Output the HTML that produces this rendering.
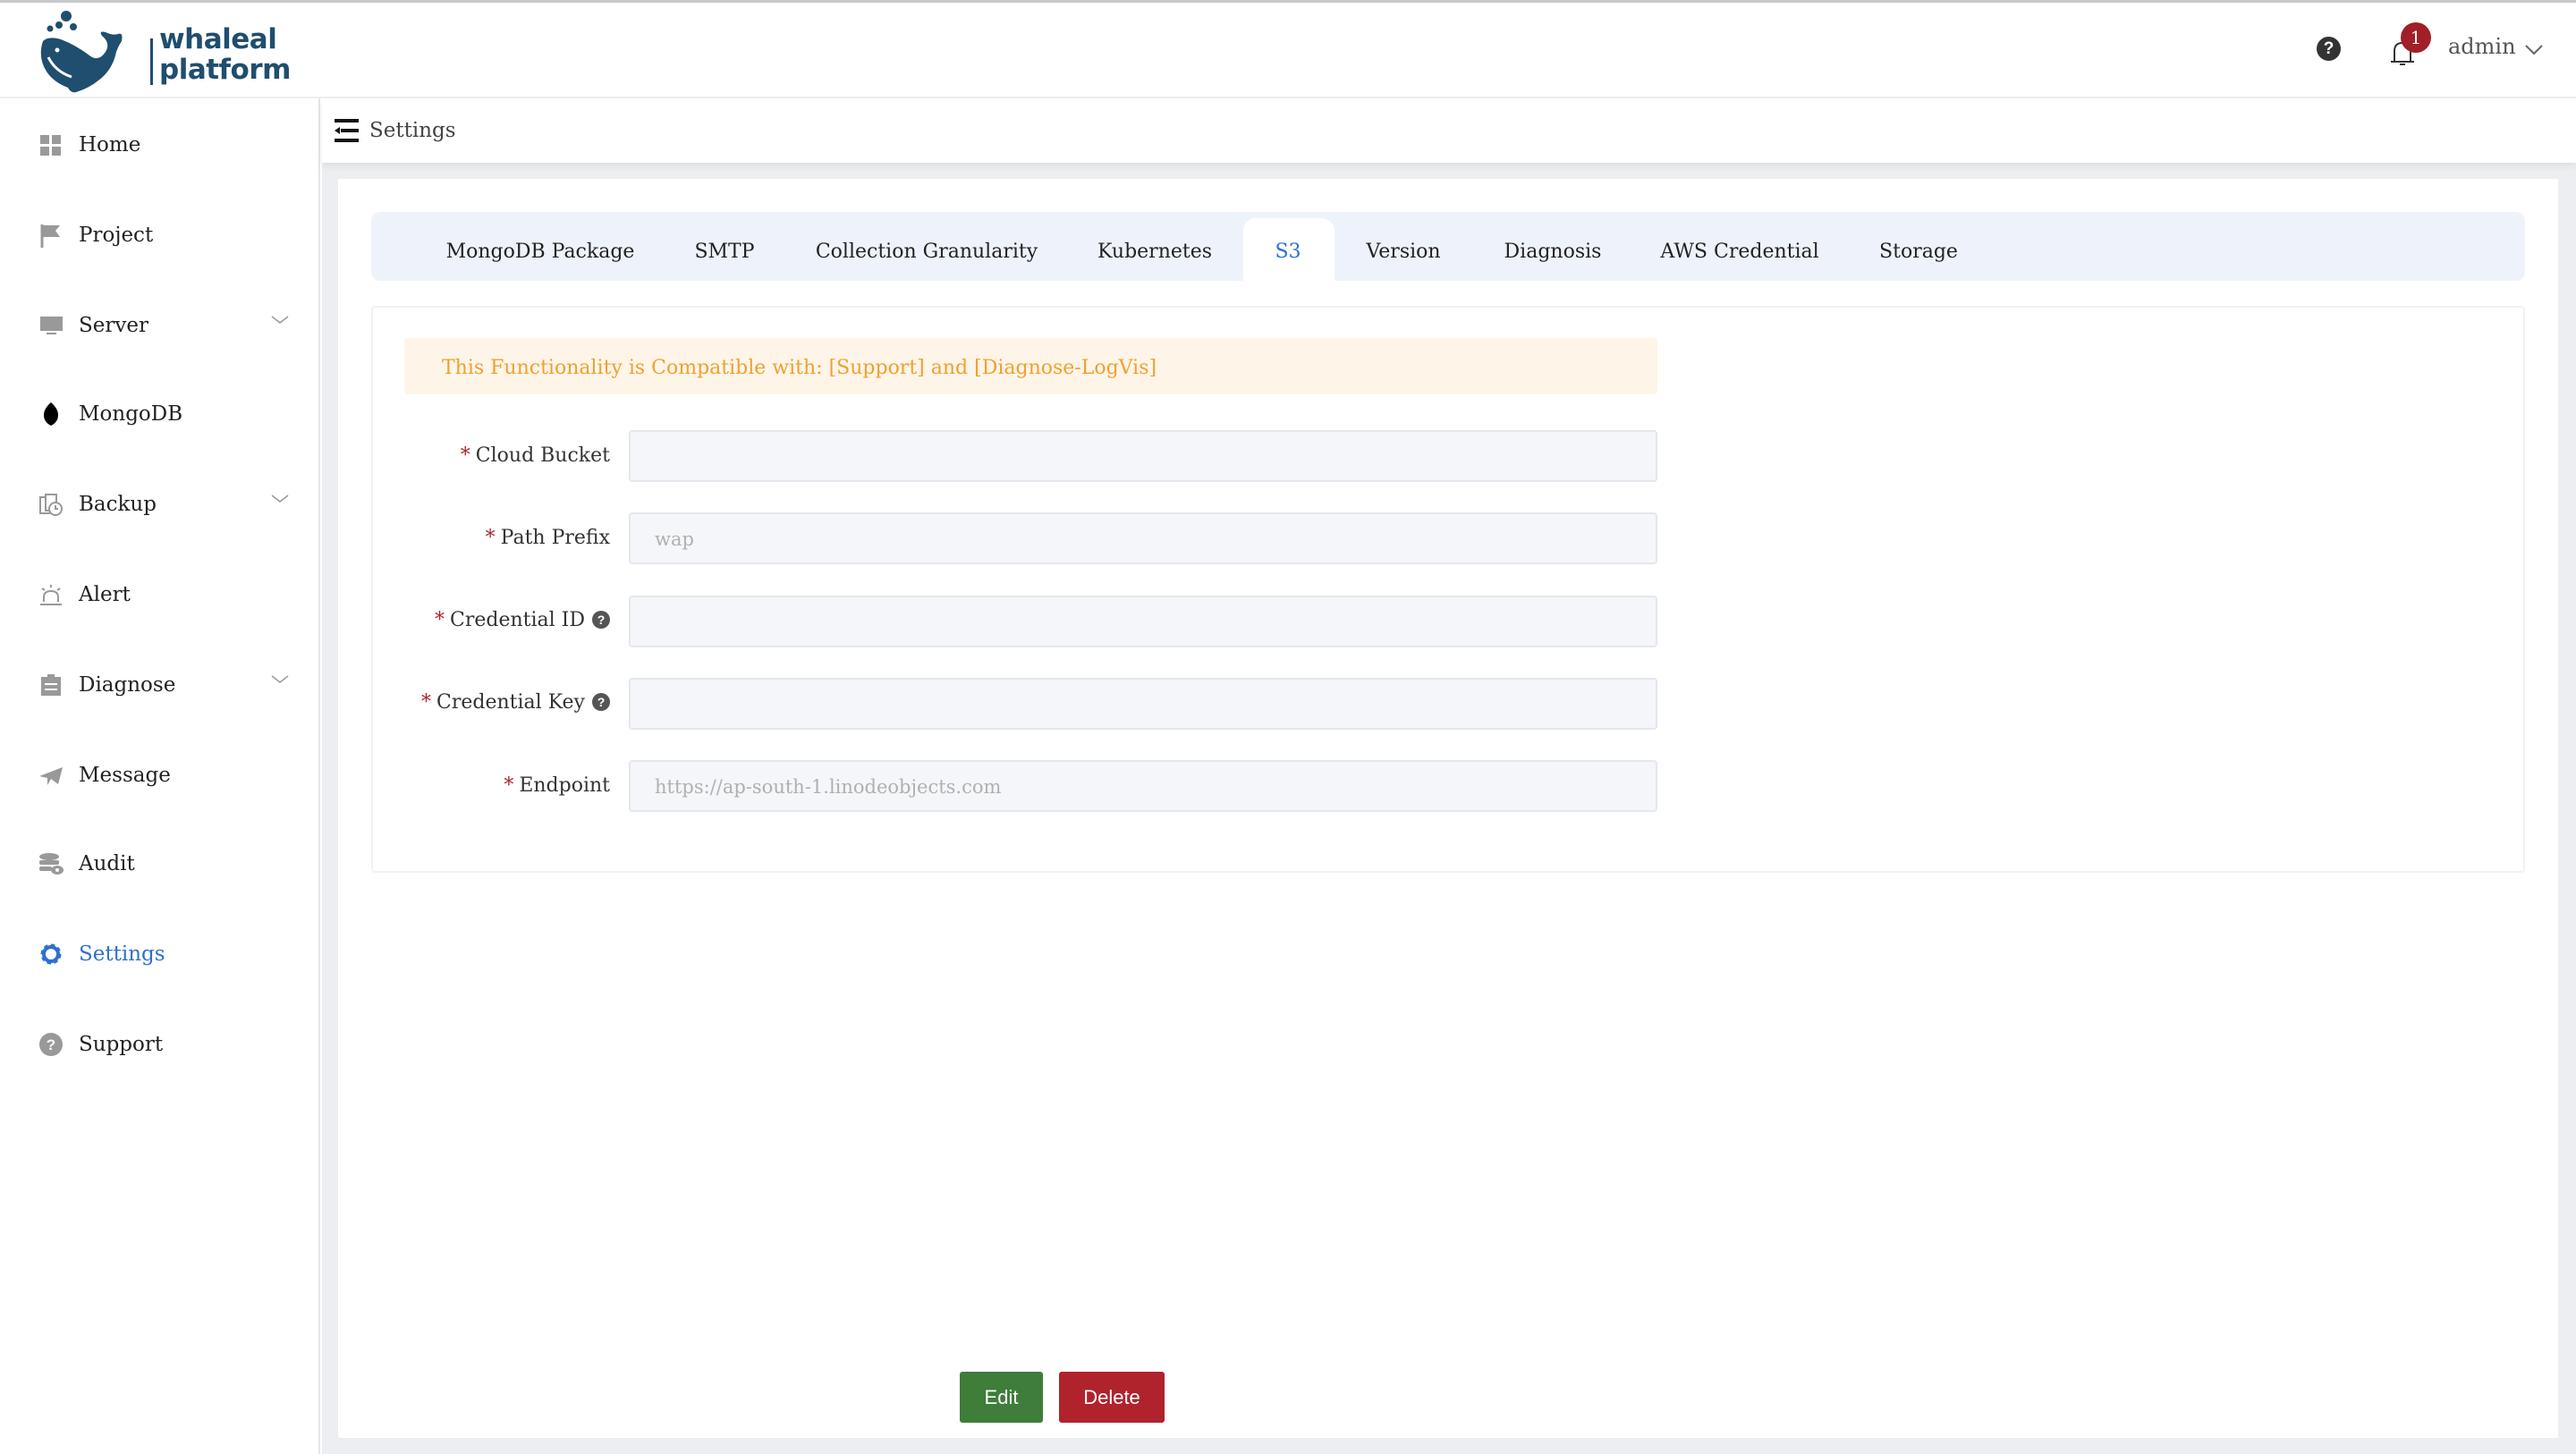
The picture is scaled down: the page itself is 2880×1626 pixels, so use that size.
<!DOCTYPE html>
<html><head><meta charset="utf-8"><style>
*{box-sizing:border-box;margin:0;padding:0}
body{width:2880px;height:1626px;overflow:hidden;background:#fff;font-family:"DejaVu Serif","Liberation Serif",serif;color:#222;position:relative}
.topline{position:absolute;left:0;top:0;width:2880px;height:3px;background:#c8c8c8}
.header{position:absolute;left:0;top:3px;width:2880px;height:107px;background:#fff;border-bottom:2px solid #eee}
.side{position:absolute;left:0;top:110px;width:358px;height:1516px;background:#fff;border-right:2px solid #e6e6e6}
.item{position:absolute;left:0;width:356px;height:60px;font-size:23px;display:flex;align-items:center}
.item .ic{position:absolute;left:43px;width:28px;height:28px;top:16px}
.item .tx{position:absolute;left:88px;top:17px}
.item .chev{position:absolute;left:303px;top:18px}
.crumb{position:absolute;left:360px;top:112px;width:2520px;height:70px;background:#fff;box-shadow:0 3px 8px rgba(0,0,0,.08)}
.main{position:absolute;left:360px;top:182px;width:2520px;height:1444px;background:#eceef2}
.card{position:absolute;left:378px;top:200px;width:2482px;height:1408px;background:#fff}
.tabs{position:absolute;left:415px;top:237px;width:2408px;height:77px;background:#eef3fb;border-radius:10px}
.tab{position:absolute;top:269px;font-size:22px;color:#222;transform:translateX(-50%);white-space:nowrap}
.panel{position:absolute;left:415px;top:342px;width:2408px;height:634px;border:2px solid #f0f2f5;border-radius:4px}
.alert{position:absolute;left:452px;top:378px;width:1401px;height:63px;background:#fef5e8;border-radius:4px;color:#f0a030;font-size:22px;padding:21px 0 0 42px}
.lbl{position:absolute;right:2198px;font-size:22px;color:#333;white-space:nowrap}
.lbl b{color:#b0222c;font-weight:normal;margin-right:6px}
.q{display:inline-block;width:20px;height:20px;border-radius:50%;background:#555;color:#fff;font-size:14px;text-align:center;line-height:20px;font-family:"Liberation Sans",sans-serif;font-weight:bold;margin-left:8px;vertical-align:2px}
.inp{position:absolute;left:703px;width:1150px;height:58px;background:#f5f6fa;border:2px solid #e4e7ed;border-radius:4px;font-size:21px;color:#b0b0b0;padding:16px 0 0 27px}
.btn{position:absolute;top:1534px;height:57px;color:#fff;font-family:"Liberation Sans",sans-serif;font-size:22px;text-align:center;line-height:57px;border-radius:3px}
</style></head><body>
<div class="topline"></div>
<div class="header">
  <svg style="position:absolute;left:40px;top:3px" width="120" height="100" viewBox="0 0 120 100">
    <g fill="#1f4e6e">
      <circle cx="34" cy="12" r="6"/><circle cx="26" cy="22" r="4"/><circle cx="42" cy="24" r="4"/><circle cx="16" cy="26" r="3.5"/>
      <path d="M8 40 Q14 34 28 38 Q44 44 60 56 Q70 64 78 52 Q84 42 74 34 Q70 28 78 30 Q86 34 92 32 Q98 30 96 40 Q92 46 90 52 Q86 72 70 84 Q60 92 48 96 Q40 100 36 92 Q20 86 12 74 Q2 58 8 40Z"/>
    </g>
    <path d="M14 58 Q22 74 40 80" stroke="#fff" stroke-width="3" fill="none"/>
    <circle cx="24" cy="50" r="2.5" fill="#fff"/>
  </svg>
  <div style="position:absolute;left:168px;top:40px;width:3px;height:52px;background:#1f4e6e"></div>
  <div style="position:absolute;left:178px;top:24px;font-family:'DejaVu Sans','Liberation Sans',sans-serif;font-weight:bold;color:#1f4e6e;font-size:31px;line-height:34px;letter-spacing:-0.5px">whaleal<br>platform</div>
  <div style="position:absolute;left:2590px;top:38px;width:27px;height:27px;border-radius:50%;background:#333;color:#fff;font-family:'Liberation Sans',sans-serif;font-weight:bold;font-size:19px;text-align:center;line-height:27px">?</div>
  <svg style="position:absolute;left:2671px;top:40px" width="30" height="32" viewBox="0 0 30 32"><path d="M6 25 V14 Q6 5 15 5 Q24 5 24 14 V25 M2 26 H28 M12 29 H18" stroke="#333" stroke-width="2" fill="none"/></svg>
  <div style="position:absolute;left:2684px;top:22px;width:34px;height:34px;border-radius:50%;background:#a01f28;color:#fff;font-size:20px;text-align:center;line-height:34px">1</div>
  <div style="position:absolute;left:2737px;top:35px;font-size:24px;color:#555">admin</div>
  <svg style="position:absolute;left:2822px;top:46px" width="22" height="14" viewBox="0 0 22 14"><path d="M2 2 L11 11 L20 2" stroke="#666" stroke-width="2" fill="none"/></svg>
</div>
<div class="side">
  <div class="item" style="top:22px"><svg class="ic" viewBox="0 0 28 28"><g fill="#999"><rect x="2" y="3" width="10" height="10"/><rect x="15" y="3" width="10" height="10"/><rect x="2" y="16" width="10" height="10"/><rect x="15" y="16" width="10" height="10"/></g></svg><span class="tx">Home</span></div>
  <div class="item" style="top:123px"><svg class="ic" viewBox="0 0 28 28"><path d="M4 2 V28" stroke="#999" stroke-width="3"/><path d="M5 3 H24 L19 9 L24 16 H5Z" fill="#999"/></svg><span class="tx">Project</span></div>
  <div class="item" style="top:224px"><svg class="ic" viewBox="0 0 28 28"><rect x="2" y="4" width="25" height="16" fill="#999"/><rect x="9" y="22" width="11" height="2" fill="#999"/></svg><span class="tx">Server</span><svg class="chev" width="20" height="12" viewBox="0 0 20 12"><path d="M1 2 L10 9 L19 2" stroke="#999" stroke-width="1.5" fill="none"/></svg></div>
  <div class="item" style="top:323px"><svg class="ic" viewBox="0 0 28 28"><path d="M14 1 Q22 8 22 15 Q22 23 14 27 Q6 23 6 15 Q6 8 14 1Z" fill="#000"/></svg><span class="tx">MongoDB</span></div>
  <div class="item" style="top:424px"><svg class="ic" viewBox="0 0 28 28"><g stroke="#999" stroke-width="2" fill="none"><rect x="2" y="6" width="12" height="18"/><rect x="8" y="3" width="12" height="18" fill="#fff"/><circle cx="19" cy="19" r="7" fill="#fff"/><path d="M19 15 V19 H22"/></g></svg><span class="tx">Backup</span><svg class="chev" width="20" height="12" viewBox="0 0 20 12"><path d="M1 2 L10 9 L19 2" stroke="#999" stroke-width="1.5" fill="none"/></svg></div>
  <div class="item" style="top:525px"><svg class="ic" viewBox="0 0 28 28"><g stroke="#999" stroke-width="2" fill="none"><path d="M6 22 V17 Q6 10 14 10 Q22 10 22 17 V22"/><path d="M2 25 H26 M14 3 V6 M4 7 L7 9 M24 7 L21 9"/></g></svg><span class="tx">Alert</span></div>
  <div class="item" style="top:626px"><svg class="ic" viewBox="0 0 28 28"><rect x="3" y="5" width="22" height="21" fill="#999"/><rect x="10" y="2" width="8" height="5" fill="#999"/><path d="M7 13 H21 M7 19 H21" stroke="#fff" stroke-width="2"/></svg><span class="tx">Diagnose</span><svg class="chev" width="20" height="12" viewBox="0 0 20 12"><path d="M1 2 L10 9 L19 2" stroke="#999" stroke-width="1.5" fill="none"/></svg></div>
  <div class="item" style="top:727px"><svg class="ic" viewBox="0 0 28 28"><path d="M1 15 L27 5 L22 24 L14 18 L10 25 L10 17Z" fill="#999"/></svg><span class="tx">Message</span></div>
  <div class="item" style="top:826px"><svg class="ic" viewBox="0 0 28 28"><g fill="#999"><ellipse cx="12" cy="6" rx="11" ry="4"/><rect x="1" y="10" width="22" height="5" rx="2"/><rect x="1" y="17" width="14" height="5" rx="2"/><ellipse cx="21" cy="21" rx="7" ry="5"/></g><circle cx="21" cy="21" r="2" fill="#fff"/></svg><span class="tx">Audit</span></div>
  <div class="item" style="top:927px;color:#2f6fd0"><svg class="ic" viewBox="0 0 28 28"><circle cx="14" cy="14" r="9" fill="none" stroke="#2f6fd0" stroke-width="5" stroke-dasharray="4 3"/><circle cx="14" cy="14" r="8" fill="none" stroke="#2f6fd0" stroke-width="4"/></svg><span class="tx">Settings</span></div>
  <div class="item" style="top:1028px"><svg class="ic" viewBox="0 0 28 28"><circle cx="14" cy="14" r="13" fill="#999"/><text x="14" y="20" font-size="17" font-family="Liberation Sans" font-weight="bold" fill="#fff" text-anchor="middle">?</text></svg><span class="tx">Support</span></div>
</div>
<div class="main"></div>
<div class="crumb">
  <svg style="position:absolute;left:14px;top:21px" width="28" height="26" viewBox="0 0 28 26"><rect x="0" y="0" width="27" height="4" fill="#111"/><rect x="7" y="11" width="20" height="4" fill="#111"/><rect x="0" y="22" width="27" height="4" fill="#111"/><path d="M0 13 L6 9 V17Z" fill="#111"/></svg>
  <div style="position:absolute;left:53px;top:21px;font-size:23px;color:#444">Settings</div>
</div>
<div class="card"></div>
<div class="tabs"></div>
<div style="position:absolute;left:1390px;top:244px;width:102px;height:70px;background:#fff;border-radius:14px 14px 0 0"></div>
<div class="tab" style="left:604px">MongoDB Package</div>
<div class="tab" style="left:810px">SMTP</div>
<div class="tab" style="left:1036px">Collection Granularity</div>
<div class="tab" style="left:1291px">Kubernetes</div>
<div class="tab" style="left:1440px;color:#2f6fd0">S3</div>
<div class="tab" style="left:1569px">Version</div>
<div class="tab" style="left:1736px">Diagnosis</div>
<div class="tab" style="left:1945px">AWS Credential</div>
<div class="tab" style="left:2145px">Storage</div>
<div class="panel"></div>
<div class="alert">This Functionality is Compatible with: [Support] and [Diagnose-LogVis]</div>
<div class="lbl" style="top:497px"><b>*</b>Cloud Bucket</div>
<div class="inp" style="top:481px"></div>
<div class="lbl" style="top:589px"><b>*</b>Path Prefix</div>
<div class="inp" style="top:573px">wap</div>
<div class="lbl" style="top:681px"><b>*</b>Credential ID<span class="q">?</span></div>
<div class="inp" style="top:666px"></div>
<div class="lbl" style="top:773px"><b>*</b>Credential Key<span class="q">?</span></div>
<div class="inp" style="top:758px"></div>
<div class="lbl" style="top:866px"><b>*</b>Endpoint</div>
<div class="inp" style="top:850px">https://ap-south-1.linodeobjects.com</div>
<div class="btn" style="left:1073px;width:93px;background:#3e7d3a">Edit</div>
<div class="btn" style="left:1184px;width:118px;background:#b0222c">Delete</div>
</body></html>
